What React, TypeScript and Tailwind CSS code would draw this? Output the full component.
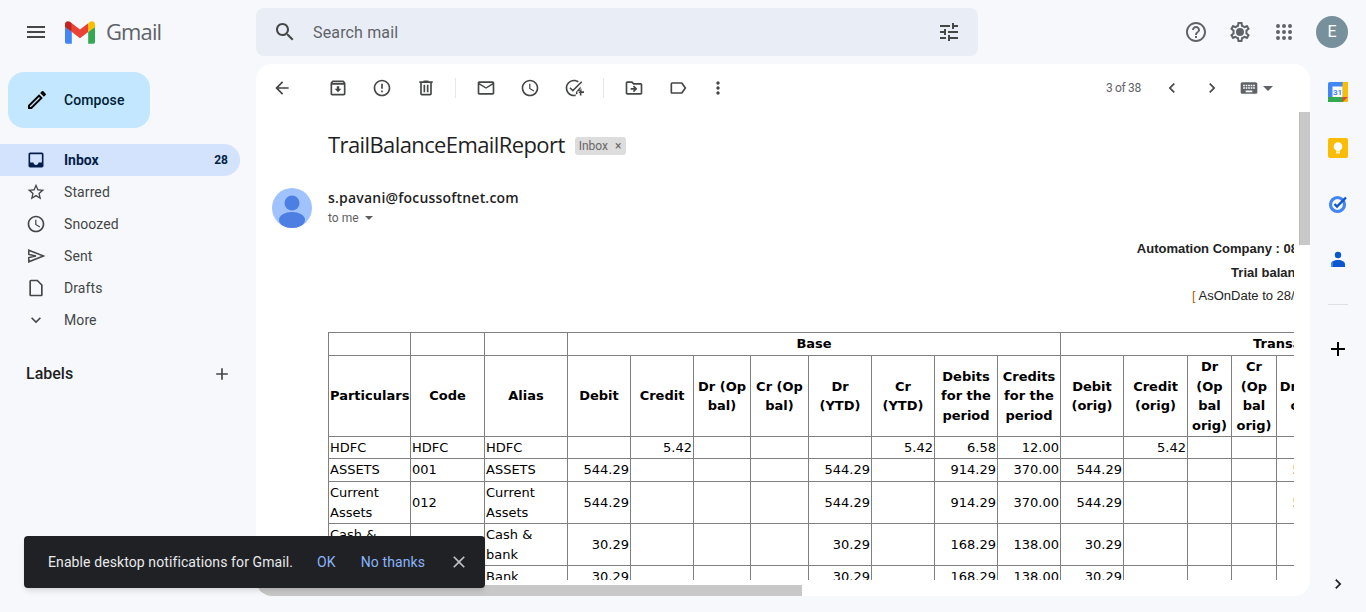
const P = {
  menu: "M3 18h18v-2H3v2zm0-5h18v-2H3v2zm0-7v2h18V6H3z",
  search: "M15.5 14h-.79l-.28-.27C15.41 12.59 16 11.11 16 9.5 16 5.91 13.09 3 9.5 3S3 5.91 3 9.5 5.91 16 9.5 16c1.61 0 3.09-.59 4.23-1.57l.27.28v.79l5 4.99L20.49 19l-4.99-5zm-6 0C7.01 14 5 11.99 5 9.5S7.01 5 9.5 5 14 7.01 14 9.5 11.99 14 9.5 14z",
  tune: "M3 17v2h6v-2H3zM3 5v2h10V5H3zm10 16v-2h8v-2h-8v-2h-2v6h2zM7 9v2H3v2h4v2h2V9H7zm14 4v-2H11v2h10zm-6-4h2V7h4V5h-4V3h-2v6z",
  help: "M11 18h2v-2h-2v2zm1-16C6.48 2 2 6.48 2 12s4.48 10 10 10 10-4.48 10-10S17.52 2 12 2zm0 18c-4.41 0-8-3.59-8-8s3.59-8 8-8 8 3.59 8 8-3.59 8-8 8zm0-14c-2.21 0-4 1.79-4 4h2c0-1.1.9-2 2-2s2 .9 2 2c0 2-3 1.75-3 5h2c0-2.25 3-2.5 3-5 0-2.21-1.79-4-4-4z",
  gear: "M19.43 12.98c.04-.32.07-.64.07-.98 0-.34-.03-.66-.07-.98l2.11-1.65c.19-.15.24-.42.12-.64l-2-3.46c-.09-.16-.26-.25-.44-.25-.06 0-.12.01-.17.03l-2.49 1c-.52-.4-1.08-.73-1.69-.98l-.38-2.65C14.46 2.18 14.25 2 14 2h-4c-.25 0-.46.18-.49.42l-.38 2.65c-.61.25-1.17.59-1.69.98l-2.49-1c-.06-.02-.12-.03-.18-.03-.17 0-.34.09-.43.25l-2 3.46c-.13.22-.07.49.12.64l2.11 1.65c-.04.32-.07.65-.07.98 0 .33.03.66.07.98l-2.11 1.65c-.19.15-.24.42-.12.64l2 3.46c.09.16.26.25.44.25.06 0 .12-.01.17-.03l2.49-1c.52.4 1.08.73 1.69.98l.38 2.65c.03.24.24.42.49.42h4c.25 0 .46-.18.49-.42l.38-2.65c.61-.25 1.17-.59 1.69-.98l2.49 1c.06.02.12.03.18.03.17 0 .34-.09.43-.25l2-3.46c.12-.22.07-.49-.12-.64l-2.11-1.65zm-1.98-1.71c.04.31.05.52.05.73 0 .21-.02.43-.05.73l-.14 1.13.89.7 1.08.84-.7 1.21-1.27-.51-1.04-.42-.9.68c-.43.32-.84.56-1.25.73l-1.06.43-.16 1.13-.2 1.35h-1.4l-.19-1.35-.16-1.13-1.06-.43c-.43-.18-.83-.41-1.23-.71l-.91-.7-1.06.43-1.27.51-.7-1.21 1.08-.84.89-.7-.14-1.13c-.03-.31-.05-.54-.05-.74s.02-.43.05-.73l.14-1.13-.89-.7-1.08-.84.7-1.21 1.27.51 1.04.42.9-.68c.43-.32.84-.56 1.25-.73l1.06-.43.16-1.13.2-1.35h1.39l.19 1.35.16 1.13 1.06.43c.43.18.83.41 1.23.71l.91.7 1.06-.43 1.27-.51.7 1.21-1.07.85-.89.7.14 1.13zM12 8a4 4 0 1 0 0 8 4 4 0 0 0 0-8z",
  edit: "M3 17.25V21h3.75L17.81 9.94l-3.75-3.75L3 17.25zM5.92 19H5v-.92l9.06-9.06.92.92L5.92 19zM20.71 5.63l-2.34-2.34c-.2-.2-.45-.29-.71-.29s-.51.1-.7.29l-1.83 1.83 3.75 3.75 1.83-1.83c.39-.39.39-1.02 0-1.41z",
  inbox: "M19 3H4.99c-1.11 0-1.98.89-1.98 2L3 19c0 1.1.88 2 1.99 2H19c1.1 0 2-.9 2-2V5c0-1.11-.9-2-2-2zm0 12h-4c0 1.66-1.35 3-3 3s-3-1.34-3-3H4.99V5H19v10z",
  star: "M22 9.24l-7.19-.62L12 2 9.19 8.63 2 9.24l5.46 4.73L5.82 21 12 17.27 18.18 21l-1.63-7.03L22 9.24zM12 15.4l-3.76 2.27 1-4.28-3.32-2.88 4.38-.38L12 6.1l1.71 4.04 4.38.38-3.32 2.88 1 4.28L12 15.4z",
  clock: "M11.99 2C6.47 2 2 6.48 2 12s4.47 10 9.99 10C17.52 22 22 17.52 22 12S17.52 2 11.99 2zM12 20c-4.42 0-8-3.58-8-8s3.58-8 8-8 8 3.58 8 8-3.58 8-8 8zm.5-13H11v6l5.25 3.15.75-1.23-4.5-2.67z",
  draft: "M14 2H6c-1.1 0-2 .9-2 2v16c0 1.1.9 2 2 2h12c1.1 0 2-.9 2-2V8l-6-6zm4 18H6V4h7.17L18 8.83V20z",
  expand: "M16.59 8.59L12 13.17 7.41 8.59 6 10l6 6 6-6z",
  add: "M19 13h-6v6h-2v-6H5v-2h6V5h2v6h6v2z",
  back: "M20 11H7.83l5.59-5.59L12 4l-8 8 8 8 1.41-1.41L7.83 13H20v-2z",
  archive: "M20.54 5.23l-1.39-1.68C18.88 3.21 18.47 3 18 3H6c-.47 0-.88.21-1.16.55L3.46 5.23C3.17 5.57 3 6.02 3 6.5V19c0 1.1.9 2 2 2h14c1.1 0 2-.9 2-2V6.5c0-.48-.17-.93-.46-1.27zM6.24 5h11.52l.81.97H5.44l.8-.97zM5 19V8h14v11H5zm8.45-9h-2.9v3H8l4 4 4-4h-2.55z",
  report: "M11 15h2v2h-2zm0-8h2v6h-2zm.99-5C6.47 2 2 6.48 2 12s4.47 10 9.99 10C17.52 22 22 17.52 22 12S17.52 2 11.99 2zM12 20c-4.42 0-8-3.58-8-8s3.58-8 8-8 8 3.58 8 8-3.58 8-8 8z",
  trash: "M15 4V3H9v1H4v2h1v13c0 1.1.9 2 2 2h10c1.1 0 2-.9 2-2V6h1V4h-5zm2 15H7V6h10v13zM9 8h2v9H9zm4 0h2v9h-2z",
  mail: "M22 6c0-1.1-.9-2-2-2H4c-1.1 0-2 .9-2 2v12c0 1.1.9 2 2 2h16c1.1 0 2-.9 2-2V6zm-2 0l-8 5-8-5h16zm0 12H4V8l8 5 8-5v10z",
  task: "M22 5.18L10.59 16.6l-4.24-4.24 1.41-1.41 2.83 2.83 10-10L22 5.18zM19.79 10.22c.13.57.21 1.17.21 1.78 0 4.42-3.58 8-8 8s-8-3.58-8-8 3.58-8 8-8c1.58 0 3.04.46 4.28 1.25l1.44-1.44C16.1 2.67 14.13 2 12 2 6.48 2 2 6.48 2 12s4.48 10 10 10c.7 0 1.4-.07 2-.2v-2.1h0l.3-.1V17h-.3zM19 16h-3v2h3v3h2v-3h3v-2h-3v-3h-2v3z",
  move: "M20 6h-8l-2-2H4c-1.1 0-1.99.9-1.99 2L2 18c0 1.1.9 2 2 2h16c1.1 0 2-.9 2-2V8c0-1.1-.9-2-2-2zm0 12H4V6h5.17l2 2H20v10zm-8.01-9l-1.41 1.41L12.16 12H8v2h4.16l-1.59 1.59L11.99 17 16 13.01 11.99 9z",
  label: "M17.63 5.84C17.27 5.33 16.67 5 16 5L5 5.01C3.9 5.01 3 5.9 3 7v10c0 1.1.9 1.99 2 1.99L16 19c.67 0 1.27-.33 1.63-.84L22 12l-4.37-6.16zM16 17H5V7h11l3.55 5L16 17z",
  more: "M12 8c1.1 0 2-.9 2-2s-.9-2-2-2-2 .9-2 2 .9 2 2 2zm0 2c-1.1 0-2 .9-2 2s.9 2 2 2 2-.9 2-2-.9-2-2-2zm0 6c-1.1 0-2 .9-2 2s.9 2 2 2 2-.9 2-2-.9-2-2-2z",
  prev: "M15.41 7.41L14 6l-6 6 6 6 1.41-1.41L10.83 12z",
  next: "M10 6L8.59 7.41 13.17 12l-4.58 4.59L10 18l6-6z",
  keyboard: "M20 5H4c-1.1 0-1.99.9-1.99 2L2 17c0 1.1.9 2 2 2h16c1.1 0 2-.9 2-2V7c0-1.1-.9-2-2-2zm-9 3h2v2h-2V8zm0 3h2v2h-2v-2zM8 8h2v2H8V8zm0 3h2v2H8v-2zm-1 2H5v-2h2v2zm0-3H5V8h2v2zm9 7H8v-2h8v2zm0-4h-2v-2h2v2zm0-3h-2V8h2v2zm3 3h-2v-2h2v2zm0-3h-2V8h2v2z",
  close: "M19 6.41L17.59 5 12 10.59 6.41 5 5 6.41 10.59 12 5 17.59 6.41 19 12 13.41 17.59 19 19 17.59 13.41 12z",
  apps: "M6 8a2 2 0 1 0 0-4 2 2 0 0 0 0 4zm6 0a2 2 0 1 0 0-4 2 2 0 0 0 0 4zm6 0a2 2 0 1 0 0-4 2 2 0 0 0 0 4zM6 14a2 2 0 1 0 0-4 2 2 0 0 0 0 4zm6 0a2 2 0 1 0 0-4 2 2 0 0 0 0 4zm6 0a2 2 0 1 0 0-4 2 2 0 0 0 0 4zM6 20a2 2 0 1 0 0-4 2 2 0 0 0 0 4zm6 0a2 2 0 1 0 0-4 2 2 0 0 0 0 4zm6 0a2 2 0 1 0 0-4 2 2 0 0 0 0 4z",
};

const Icon = ({ d, className = "w-6 h-6 text-[#444746]" }: { d: string; className?: string }) => (
  <svg viewBox="0 0 24 24" fill="currentColor" className={className}>
    <path d={d} />
  </svg>
);

const SentIcon = () => (
  <svg viewBox="0 0 20 20" fill="none" stroke="#444746" strokeWidth="1.5" className="w-5 h-5">
    <path d="M2.800 4.200 17.500 10 2.800 15.800v-4.300L10 10 2.800 8.500z" />
  </svg>
);

const GmailLogo = () => (
  <svg viewBox="0 0 256 193" className="w-[30px] h-[23px]">
    <path fill="#4285F4" d="M58.182 192.05V93.14L27.507 65.077 0 49.504v125.091c0 9.658 7.825 17.455 17.455 17.455h40.727Z" />
    <path fill="#34A853" d="M197.818 192.05h40.727c9.659 0 17.455-7.826 17.455-17.455V49.505l-31.156 17.837-27.026 25.798v98.91Z" />
    <path fill="#EA4335" d="m58.182 93.14-4.174-38.647 4.174-36.989L128 69.868l69.818-52.364 4.669 34.992-4.669 40.644L128 145.504z" />
    <path fill="#FBBC04" d="M197.818 17.504V93.14L256 49.504V26.231c0-21.585-24.64-33.89-41.89-20.945l-16.292 12.218Z" />
    <path fill="#C5221F" d="m0 49.504 26.759 20.07L58.182 93.14V17.504L41.89 5.286C24.61-7.66 0 4.646 0 26.23v23.273Z" />
  </svg>
);

const navItems = [
  { icon: <Icon d={P.star} className="w-5 h-5 text-[#444746]" />, label: "Starred" },
  { icon: <Icon d={P.clock} className="w-5 h-5 text-[#444746]" />, label: "Snoozed" },
  { icon: <SentIcon />, label: "Sent" },
  { icon: <Icon d={P.draft} className="w-5 h-5 text-[#444746]" />, label: "Drafts" },
  { icon: <Icon d={P.expand} className="w-5 h-5 text-[#444746]" />, label: "More" },
];

const Sidebar = () => (
  <aside className="w-[256px] shrink-0">
    <div className="pl-4 pt-2 h-[64px]">
      <div className="flex items-center h-12">
        <div className="w-10 h-10 flex items-center justify-center"><Icon d={P.menu} /></div>
        <div className="ml-[9px] flex items-center">
          <GmailLogo />
          <span className="ml-[11px] mb-[1px] text-[22px] text-[#5f6368] font-['Open_Sans',sans-serif] tracking-[-0.9px]">Gmail</span>
        </div>
      </div>
    </div>
    <div className="pl-2 mt-2">
      <button className="w-[142px] h-14 rounded-2xl bg-[#c2e7ff] flex items-center pl-[17px] text-sm font-medium tracking-[0.1px] text-[#001d35]">
        <Icon d={P.edit} className="w-6 h-6 text-black" />
        <span className="ml-[15px]">Compose</span>
      </button>
    </div>
    <nav className="mt-4 w-[240px]">
      <div className="h-8 rounded-r-full bg-[#d3e3fd] flex items-center pl-[26px] pr-3 text-sm font-bold text-[#041e49]">
        <Icon d={P.inbox} className="w-5 h-5 text-[#041e49]" />
        <span className="ml-[18px]">Inbox</span>
        <span className="ml-auto text-xs">28</span>
      </div>
      {navItems.map((n) => (
        <div key={n.label} className="h-8 flex items-center pl-[26px] text-sm tracking-[0.1px] text-[#444746]">
          {n.icon}
          <span className="ml-[18px]">{n.label}</span>
        </div>
      ))}
    </nav>
    <div className="mt-[22px] w-[240px] pl-[26px] pr-[8px] h-8 flex items-center justify-between">
      <span className="text-base font-medium text-[#1f1f1f]">Labels</span>
      <Icon d={P.add} className="w-5 h-5 text-[#444746]" />
    </div>
  </aside>
);

const TopBar = () => (
  <header className="h-[64px] flex items-start pt-2">
    <div className="w-[722px] h-12 rounded-lg bg-[#e9eef6] flex items-center pl-[17px] pr-[17px]">
      <Icon d={P.search} className="w-6 h-6 text-[#444746]" />
      <span className="ml-[16px] pt-px text-base tracking-[0.15px] text-[#5f6368]">Search mail</span>
      <Icon d={P.tune} className="ml-auto w-6 h-6 text-[#444746]" />
    </div>
    <div className="ml-auto flex items-center h-12 pr-[18px]">
      <Icon d={P.help} className="w-6 h-6 text-[#5f6368]" />
      <Icon d={P.gear} className="ml-5 w-6 h-6 text-[#5f6368]" />
      <Icon d={P.apps} className="ml-5 w-6 h-6 text-[#5f6368]" />
      <div className="ml-5 w-8 h-8 rounded-full bg-[#78909c] text-white text-base flex items-center justify-center">E</div>
    </div>
  </header>
);

const ToolBtn = ({ d }: { d: string }) => (
  <div className="w-10 h-10 flex items-center justify-center">
    <Icon d={d} className="w-5 h-5 text-[#444746]" />
  </div>
);

const Toolbar = () => (
  <div className="h-12 shrink-0 flex items-center pl-[6px] pr-[37px]">
    <ToolBtn d={P.back} />
    <div className="ml-4 flex gap-1">
      <ToolBtn d={P.archive} />
      <ToolBtn d={P.report} />
      <ToolBtn d={P.trash} />
    </div>
    <div className="ml-[9px] mr-[10px] w-px h-5 bg-[#e5e7ea]" />
    <div className="flex gap-1">
      <ToolBtn d={P.mail} />
      <ToolBtn d={P.clock} />
      <ToolBtn d={P.task} />
    </div>
    <div className="ml-[9px] mr-[10px] w-px h-5 bg-[#e5e7ea]" />
    <div className="flex gap-1">
      <ToolBtn d={P.move} />
      <ToolBtn d={P.label} />
    </div>
    <ToolBtn d={P.more} />
    <span className="ml-auto text-xs text-[#5f6368] tracking-[-0.3px]">3 of 38</span>
    <div className="ml-[21px] flex">
      <Icon d={P.prev} className="w-5 h-5 text-[#444746]" />
      <Icon d={P.next} className="w-5 h-5 text-[#444746] ml-[20px]" />
    </div>
    <Icon d={P.keyboard} className="ml-[17px] w-5 h-5 text-[#5f6368]" />
    <div className="ml-[4px] w-0 h-0 border-x-[5px] border-x-transparent border-t-[5px] border-t-[#5f6368]" />
  </div>
);

const widths = [
  "w-[82px]", "w-[74px]", "w-[83px]", "w-[63px]", "w-[63px]", "w-[57px]", "w-[58px]", "w-[63px]",
  "w-[63px]", "w-[63px]", "w-[63px]", "w-[63px]", "w-[64px]", "w-[44px]", "w-[45px]", "w-[63px]", "w-[191px]",
];

const heads = [
  "Particulars", "Code", "Alias", "Debit", "Credit", "Dr (Op bal)", "Cr (Op bal)", "Dr (YTD)", "Cr (YTD)",
  "Debits for the period", "Credits for the period", "Debit (orig)", "Credit (orig)",
  "Dr (Op bal orig)", "Cr (Op bal orig)", "Dr (YTD orig)", "",
];

type Row = { h: string; cells: string[] };

const rows: Row[] = [
  { h: "h-[22px]", cells: ["HDFC", "HDFC", "HDFC", "", "5.42", "", "", "", "5.42", "6.58", "12.00", "", "5.42", "", "", "", ""] },
  { h: "h-[23px]", cells: ["ASSETS", "001", "ASSETS", "544.29", "", "", "", "544.29", "", "914.29", "370.00", "544.29", "", "", "", "544.29", ""] },
  { h: "h-[42px]", cells: ["Current Assets", "012", "Current Assets", "544.29", "", "", "", "544.29", "", "914.29", "370.00", "544.29", "", "", "", "544.29", ""] },
  { h: "h-[42px]", cells: ["Cash & bank", "", "Cash & bank", "30.29", "", "", "", "30.29", "", "168.29", "138.00", "30.29", "", "", "", "30.29", ""] },
  { h: "h-[22px]", cells: ["Bank", "", "Bank", "30.29", "", "", "", "30.29", "", "168.29", "138.00", "30.29", "", "", "", "30.29", ""] },
];

const td = "border border-[#808080] px-px py-0";

const ReportTable = () => (
  <table className="table-fixed border-collapse w-[1202px] font-['DejaVu_Sans',sans-serif] text-[13px] leading-[19.5px] text-black">
    <colgroup>
      {widths.map((w, i) => (
        <col key={i} className={w} />
      ))}
    </colgroup>
    <tbody>
      <tr className="h-[23px] font-bold text-center">
        <td className={td} />
        <td className={td} />
        <td className={td} />
        <td className={td} colSpan={8}>Base</td>
        <td className={td} colSpan={6}>Transaction</td>
      </tr>
      <tr className="h-[81px] font-bold text-center">
        {heads.map((h, i) => (
          <td key={i} className={td}>{h}</td>
        ))}
      </tr>
      {rows.map((r, i) => (
        <tr key={i} className={r.h}>
          {r.cells.map((c, j) => (
            <td key={j} className={`${td} ${j > 2 ? "text-right" : "text-left"}`}>{c}</td>
          ))}
        </tr>
      ))}
    </tbody>
  </table>
);

const Message = () => (
  <div className="h-full overflow-hidden">
    <div className="pl-[72px] pt-[20px] h-[43px] flex items-center">
      <h1 className="text-[22px] leading-7 text-[#1f1f1f] font-['Open_Sans',sans-serif] tracking-[-0.6px]">TrailBalanceEmailReport</h1>
      <span className="ml-[10px] mt-[4px] h-[18px] rounded-[3px] bg-[#dddddd] pl-1 pr-[5px] flex items-center text-xs text-[#666666]">
        Inbox <span className="ml-[7px] text-[12px]">×</span>
      </span>
    </div>
    <div className="mt-[33px] pl-4 flex">
      <svg viewBox="0 0 40 40" className="w-10 h-10">
        <circle cx="20" cy="20" r="20" fill="#a0c3ff" />
        <circle cx="20" cy="15" r="7.5" fill="#4d7fe3" />
        <ellipse cx="20" cy="32" rx="13" ry="8" fill="#4d7fe3" />
      </svg>
      <div className="ml-4">
        <div className="text-sm leading-5 font-semibold tracking-[0.2px] text-[#1f1f1f] font-['Open_Sans',sans-serif]">s.pavani@focussoftnet.com</div>
        <div className="flex items-center h-5 text-xs text-[#5e5e5e]">
          to me
          <div className="ml-[6px] w-0 h-0 border-x-[4px] border-x-transparent border-t-[4px] border-t-[#5e5e5e]" />
        </div>
      </div>
    </div>
    <div className="ml-[72px] mr-[5px] mt-[9px] overflow-hidden">
      <div className="w-[1885px]">
        <div className="text-center font-['Liberation_Sans',sans-serif] text-[13px] leading-[23.5px] text-[#222222] h-[95px]">
          <div className="font-bold">Automation Company : 08/02/2022 10:15:23</div>
          <div className="font-bold">Trial balance</div>
          <div><span className="text-[#b45f06]">[</span> AsOnDate to 28/02/2022 ]</div>
        </div>
        <ReportTable />
      </div>
    </div>
  </div>
);

const MailPanel = () => (
  <main className="flex-1 min-w-0 h-[532px] bg-white rounded-2xl overflow-hidden flex flex-col">
    <Toolbar />
    <div className="flex-1 min-h-0 flex">
      <div className="flex-1 min-w-0 pb-[5px]"><Message /></div>
      <div className="w-[11px] shrink-0">
        <div className="h-[133px] bg-[#c8c8c8] border-l border-[#bdbdbd]" />
      </div>
    </div>
    <div className="h-[11px] shrink-0">
      <div className="w-[546px] h-full bg-[#c8c8c8]" />
    </div>
  </main>
);

const RightRail = () => (
  <aside className="w-[56px] shrink-0 h-[532px] flex flex-col items-center pt-[18px]">
    <svg viewBox="0 0 20 20" className="w-5 h-5">
      <rect width="20" height="20" rx="2" fill="#4285f4" />
      <rect x="14.5" y="0" width="5.5" height="20" rx="1" fill="#fbbc04" />
      <rect x="0" y="15" width="15" height="5" fill="#34a853" />
      <path d="M14.5 20v-5H20z" fill="#ea4335" />
      <rect x="4.5" y="4.5" width="10" height="10.5" fill="#fff" />
      <text x="9.5" y="12.8" textAnchor="middle" fontSize="8" fontWeight="700" fontFamily="Roboto, sans-serif" fill="#4285f4">31</text>
    </svg>
    <svg viewBox="0 0 20 20" className="w-5 h-5 mt-9">
      <rect width="20" height="20" rx="2" fill="#fbbc04" />
      <circle cx="10" cy="8.5" r="4.3" fill="#fff" />
      <rect x="8" y="12" width="4" height="1.5" fill="#fff" />
      <rect x="8" y="14.2" width="4" height="1.3" fill="#fff" />
    </svg>
    <svg viewBox="0 0 20 20" className="w-5 h-5 mt-9">
      <circle cx="9.5" cy="10.5" r="7" fill="none" stroke="#4285f4" strokeWidth="3.2" />
      <path d="M6.5 10l2.5 2.6L18 3.5" fill="none" stroke="#0b57d0" strokeWidth="2.4" />
    </svg>
    <svg viewBox="0 0 20 20" className="w-5 h-5 mt-9">
      <circle cx="10" cy="5" r="3.2" fill="#0b57d0" />
      <path d="M3 17v-2.5C3 11.5 6 10 10 10s7 1.500 7 4.500V17z" fill="#0b57d0" />
      <path d="M3 17v-2.500c0-1.500.8-2.700 2-3.400V17z" fill="#4285f4" />
    </svg>
    <div className="mt-[34px] w-5 h-px bg-[#dde1e6]" />
    <Icon d={P.add} className="mt-[32px] w-6 h-6 text-black" />
    <Icon d={P.next} className="mt-auto mb-[2px] w-5 h-5 text-[#1f1f1f]" />
  </aside>
);

const Toast = () => (
  <div className="absolute left-6 top-[536px] w-[461px] h-[52px] rounded bg-[#202124] flex items-center pl-6 text-sm tracking-[0.1px] shadow-md">
    <span className="text-[#e8eaed]">Enable desktop notifications for Gmail.</span>
    <span className="ml-6 text-[#8ab4f8]">OK</span>
    <span className="ml-[25px] text-[#8ab4f8]">No thanks</span>
    <Icon d={P.close} className="ml-6 w-5 h-5 text-[#bdc1c6]" />
  </div>
);

export default function App() {
  return (
    <div className="relative w-[1366px] h-[612px] overflow-hidden bg-[#f6f8fc] flex font-['Roboto',sans-serif]">
      <Sidebar />
      <div className="flex-1 min-w-0">
        <TopBar />
        <div className="flex items-start">
          <MailPanel />
          <RightRail />
        </div>
      </div>
      <Toast />
    </div>
  );
}
